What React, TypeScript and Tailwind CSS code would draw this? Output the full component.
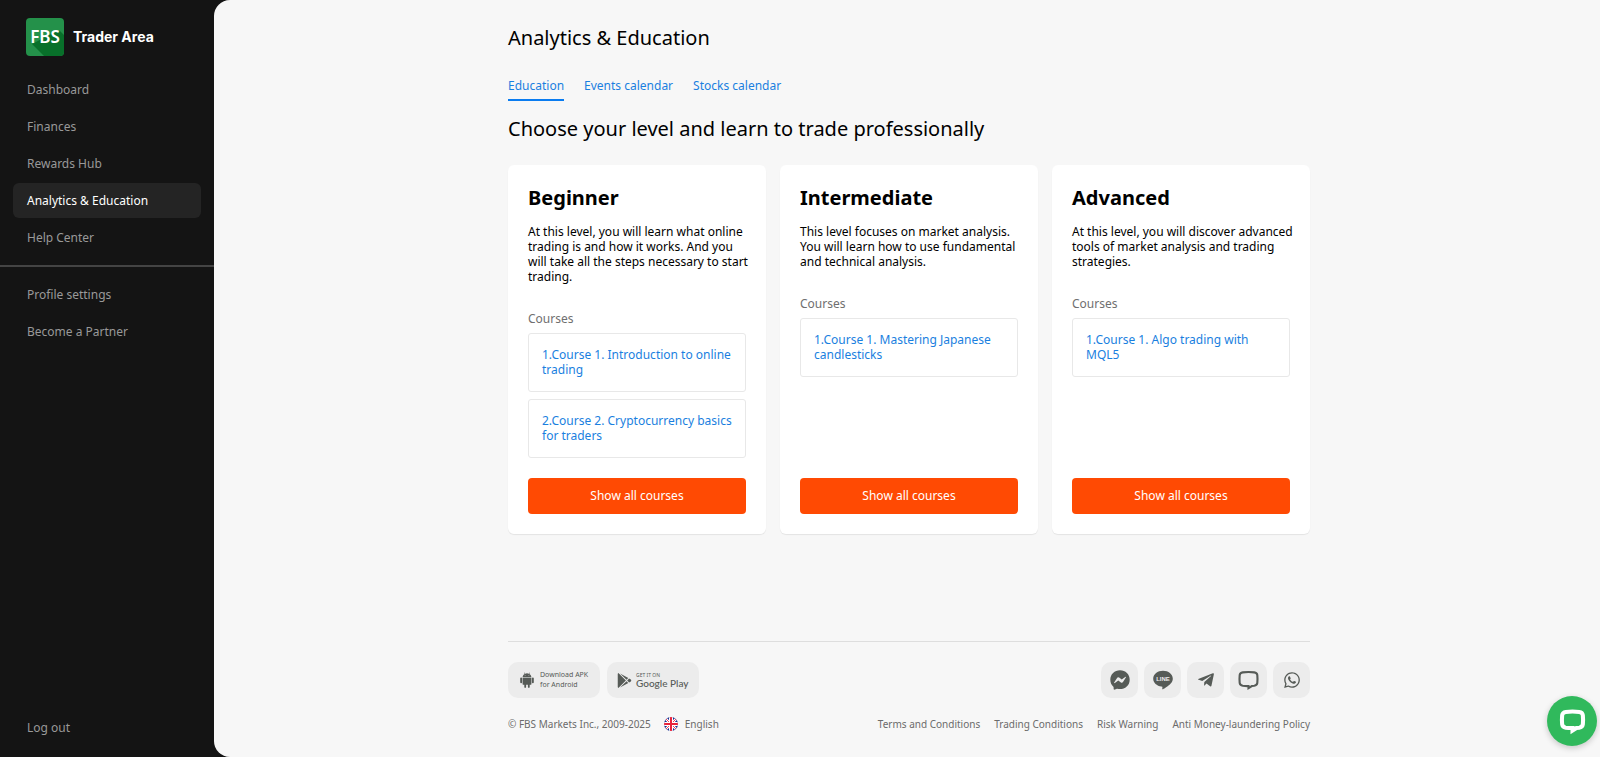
import React, { useState } from 'react';
import { FaFacebookMessenger, FaGooglePlay, FaTelegramPlane, FaWhatsapp } from 'react-icons/fa';
import clsx from 'clsx';

interface Level {
  title: string;
  description: string;
  courses: string[];
}

const mainLinks = ['Dashboard', 'Finances', 'Rewards Hub', 'Analytics & Education', 'Help Center'];
const profileLinks = ['Profile settings', 'Become a Partner'];
const tabs = ['Education', 'Events calendar', 'Stocks calendar'];
const legalLinks = [
  'Terms and Conditions',
  'Trading Conditions',
  'Risk Warning',
  'Anti Money-laundering Policy',
];

const levels: Level[] = [
  {
    title: 'Beginner',
    description:
      'At this level, you will learn what online trading is and how it works. And you will take all the steps necessary to start trading.',
    courses: ['Course 1. Introduction to online trading', 'Course 2. Cryptocurrency basics for traders'],
  },
  {
    title: 'Intermediate',
    description:
      'This level focuses on market analysis. You will learn how to use fundamental and technical analysis.',
    courses: ['Course 1. Mastering Japanese candlesticks'],
  },
  {
    title: 'Advanced',
    description:
      'At this level, you will discover advanced tools of market analysis and trading strategies.',
    courses: ['Course 1. Algo trading with MQL5'],
  },
];

function Logo() {
  return (
    <svg width="38" height="38" viewBox="0 0 38 38" role="img" aria-label="FBS">
      <rect width="38" height="38" rx="4" fill="#24914a" />
      <path d="M6 26 33 12 38 17V34a4 4 0 0 1-4 4H18z" fill="#08702a" />
      <text
        x="19"
        y="25"
        textAnchor="middle"
        fill="#fff"
        className="font-['Noto_Sans',sans-serif] text-[17px] font-semibold"
      >
        FBS
      </text>
    </svg>
  );
}

function AndroidIcon() {
  return (
    <svg width="14" height="16" viewBox="0 0 14 16" fill="currentColor" aria-hidden="true">
      <path d="M2.600 5.200C2.700 3.600 3.500 2.500 4.700 1.900L4 .7l.4-.2.700 1.200a5 5 0 0 1 3.800 0L9.600.500l.4.2-.7 1.200c1.200.6 2 1.700 2.100 3.300z" />
      <path d="M2.600 5.700h8.800v6.200a.9.900 0 0 1-.9.900h-.8v2.100a.9.900 0 0 1-1.800 0v-2.100H6.100v2.100a.9.900 0 0 1-1.800 0v-2.100h-.8a.9.900 0 0 1-.9-.9z" />
      <rect x="0.200" y="5.600" width="1.900" height="5.600" rx="0.900" />
      <rect x="11.900" y="5.600" width="1.900" height="5.600" rx="0.900" />
      <circle cx="5.100" cy="3.600" r="0.400" fill="#ececec" />
      <circle cx="8.900" cy="3.600" r="0.400" fill="#ececec" />
    </svg>
  );
}

function ChatBubble({ size, stroke }: { size: number; stroke: number }) {
  return (
    <svg width={size} height={size} viewBox="0 0 24 24" fill="none" aria-hidden="true">
      <path
        d="M6 3.500Q12 2.700 18 3.500Q20.900 3.900 21.200 6.500Q21.600 10.500 21.200 14.500Q20.900 17 18 17.500L15.500 17.800L12 20V17.800Q9 17.900 6 17.500Q3.100 17 2.800 14.500Q2.400 10.500 2.800 6.500Q3.100 3.900 6 3.500Z"
        stroke="currentColor"
        strokeWidth={stroke}
      />
    </svg>
  );
}

function LineIcon() {
  return (
    <svg width="20" height="20" viewBox="0 0 20 20" aria-hidden="true">
      <path
        d="M10 0.800c5.400 0 9.800 3.500 9.800 7.900 0 1.800-.7 3.400-2.100 4.900-2 2.300-6.600 5.200-7.600 5.600-1 .5-.9-.3-.8-.7l.1-1.100c0-.4 0-.8-.9-.9C3.700 15.900.2 12.700.2 8.700.2 4.300 4.600.8 10 .8z"
        fill="currentColor"
      />
      <text
        x="10"
        y="11"
        textAnchor="middle"
        fill="#ececec"
        className="font-['Liberation_Sans',sans-serif] text-[6px] font-bold"
      >
        LINE
      </text>
    </svg>
  );
}

function Flag() {
  return (
    <svg width="14" height="14" viewBox="0 0 14 14" aria-hidden="true">
      <clipPath id="flag">
        <circle cx="7" cy="7" r="7" />
      </clipPath>
      <g clipPath="url(#flag)">
        <rect width="14" height="14" fill="#1b2f8f" />
        <path d="M0 0 14 14M14 0 0 14" stroke="#fff" strokeWidth="2.600" />
        <path d="M0 0 14 14M14 0 0 14" stroke="#e8304a" strokeWidth="0.900" />
        <path d="M7 0V14M0 7H14" stroke="#fff" strokeWidth="4" />
        <path d="M7 0V14M0 7H14" stroke="#e8243c" strokeWidth="2" />
      </g>
    </svg>
  );
}

const socials = [
  { name: 'Messenger', icon: <FaFacebookMessenger size={20} /> },
  { name: 'LINE', icon: <LineIcon /> },
  { name: 'Telegram', icon: <FaTelegramPlane size={18} /> },
  { name: 'Live chat', icon: <ChatBubble size={23} stroke={2.2} /> },
  { name: 'WhatsApp', icon: <FaWhatsapp size={18} /> },
];

function NavLink({ label, active = false }: { label: string; active?: boolean }) {
  return (
    <a
      href="#"
      aria-current={active ? 'page' : undefined}
      className={clsx(
        'flex h-[35px] items-center rounded-md px-[14px]',
        active ? 'bg-[#242424] text-white' : 'text-[#999999] hover:text-white'
      )}
    >
      {label}
    </a>
  );
}

function LevelCard({ level }: { level: Level }) {
  return (
    <section className="flex flex-col rounded-md bg-white p-5 shadow-[0_1px_1px_rgba(0,0,0,0.08)]">
      <h3 className="text-[20px] leading-[26px] font-bold">{level.title}</h3>
      <p className="-mr-2 mt-[13px] leading-[15px]">{level.description}</p>
      <h4 className="mt-[27px] leading-[16px] text-[#6f6f6f]">Courses</h4>
      <ol className="mt-[6px] mb-5 flex flex-col gap-[7px]">
        {level.courses.map((course, i) => (
          <li key={course}>
            <a
              href="#"
              className="block rounded-[3px] border border-[#e8e8e8] px-[13px] pt-[13px] pb-[14px] leading-[15px] text-[#1a7fe0]"
            >
              {`${i + 1}.${course}`}
            </a>
          </li>
        ))}
      </ol>
      <button
        type="button"
        className="mt-auto h-9 rounded-[4px] bg-[#ff4a03] text-white hover:bg-[#e64200]"
      >
        Show all courses
      </button>
    </section>
  );
}

export default function App() {
  const [activeTab, setActiveTab] = useState('Education');

  return (
    <div className="flex min-h-screen bg-[#141414] font-['Noto_Sans',sans-serif] text-[12px] leading-[16px] text-black">
      {/* Sidebar */}
      <aside className="flex w-[214px] shrink-0 flex-col pt-[18px] pb-3">
        <a href="#" className="flex items-center gap-[9px] px-[26px] text-white">
          <Logo />
          <span className="font-['Inter',sans-serif] text-[14px] font-bold">Trader Area</span>
        </a>
        <nav className="mt-4 flex flex-1 flex-col">
          <div className="flex flex-col gap-[2px] px-[13px]">
            {mainLinks.map((label) => (
              <NavLink key={label} label={label} active={label === 'Analytics & Education'} />
            ))}
          </div>
          <hr className="my-[10px] border-t-2 border-[#444444]" />
          <div className="flex flex-col gap-[2px] px-[13px]">
            {profileLinks.map((label) => (
              <NavLink key={label} label={label} />
            ))}
          </div>
          <div className="mt-auto px-[13px]">
            <NavLink label="Log out" />
          </div>
        </nav>
      </aside>

      {/* Content */}
      <div className="flex flex-1 justify-center rounded-l-2xl bg-[#f7f7f7] pl-1">
        <div className="flex w-full max-w-[802px] flex-col">
          <main>
            <h1 className="pt-6 text-[20px] leading-[28px]">Analytics &amp; Education</h1>
            <div role="tablist" className="mt-[26px] flex gap-5">
              {tabs.map((tab) => (
                <button
                  key={tab}
                  type="button"
                  role="tab"
                  aria-selected={tab === activeTab}
                  onClick={() => setActiveTab(tab)}
                  className={clsx(
                    'border-b-2 pb-[5px] text-[#1a7fe0]',
                    tab === activeTab ? 'border-[#0a7cf0]' : 'border-transparent'
                  )}
                >
                  {tab}
                </button>
              ))}
            </div>
            <h2 className="mt-[14px] text-[20px] leading-[28px]">
              Choose your level and learn to trade professionally
            </h2>
            <div className="mt-[22px] grid grid-cols-3 gap-[14px]">
              {levels.map((level) => (
                <LevelCard key={level.title} level={level} />
              ))}
            </div>
          </main>

          {/* Footer */}
          <footer className="mt-auto border-t border-[#dedede] pt-5 pb-[25px] text-[10px] text-[#6b6b6b]">
            <div className="flex items-center justify-between text-[#565b57]">
              <div className="flex gap-[7px]">
                <a
                  href="#"
                  className="flex h-9 w-[92px] items-center gap-[6px] rounded-[10px] bg-[#ececec] pl-3"
                >
                  <AndroidIcon />
                  <span className="text-[7px] leading-[10px] whitespace-nowrap">
                    Download APK
                    <br />
                    for Android
                  </span>
                </a>
                <a
                  href="#"
                  className="flex h-9 w-[92px] items-center gap-1 rounded-[10px] bg-[#ececec] pl-[10px]"
                >
                  <FaGooglePlay size={15} />
                  <span className="flex flex-col whitespace-nowrap">
                    <span className="text-[5px] leading-[6px]">GET IT ON</span>
                    <span className="font-['Lato',sans-serif] text-[10px] leading-[11px] font-medium">
                      Google Play
                    </span>
                  </span>
                </a>
              </div>
              <div className="flex gap-[6px]">
                {socials.map(({ name, icon }) => (
                  <a
                    key={name}
                    href="#"
                    aria-label={name}
                    className="flex h-9 w-[37px] items-center justify-center rounded-[10px] bg-[#ececec]"
                  >
                    {icon}
                  </a>
                ))}
              </div>
            </div>
            <div className="mt-[18px] flex justify-between">
              <div className="flex gap-[13px]">
                <span>© FBS Markets Inc., 2009-2025</span>
                <button type="button" className="flex items-center gap-[7px]">
                  <Flag />
                  English
                </button>
              </div>
              <div className="flex gap-[14px]">
                {legalLinks.map((label) => (
                  <a key={label} href="#">
                    {label}
                  </a>
                ))}
              </div>
            </div>
          </footer>
        </div>
      </div>

      <button
        type="button"
        aria-label="Open chat"
        className="fixed right-[3px] bottom-[11px] flex size-[50px] items-center justify-center rounded-full bg-[#30b95c] text-white shadow-[0_2px_6px_rgba(0,0,0,0.2)]"
      >
        <ChatBubble size={27} stroke={3.6} />
      </button>
    </div>
  );
}
